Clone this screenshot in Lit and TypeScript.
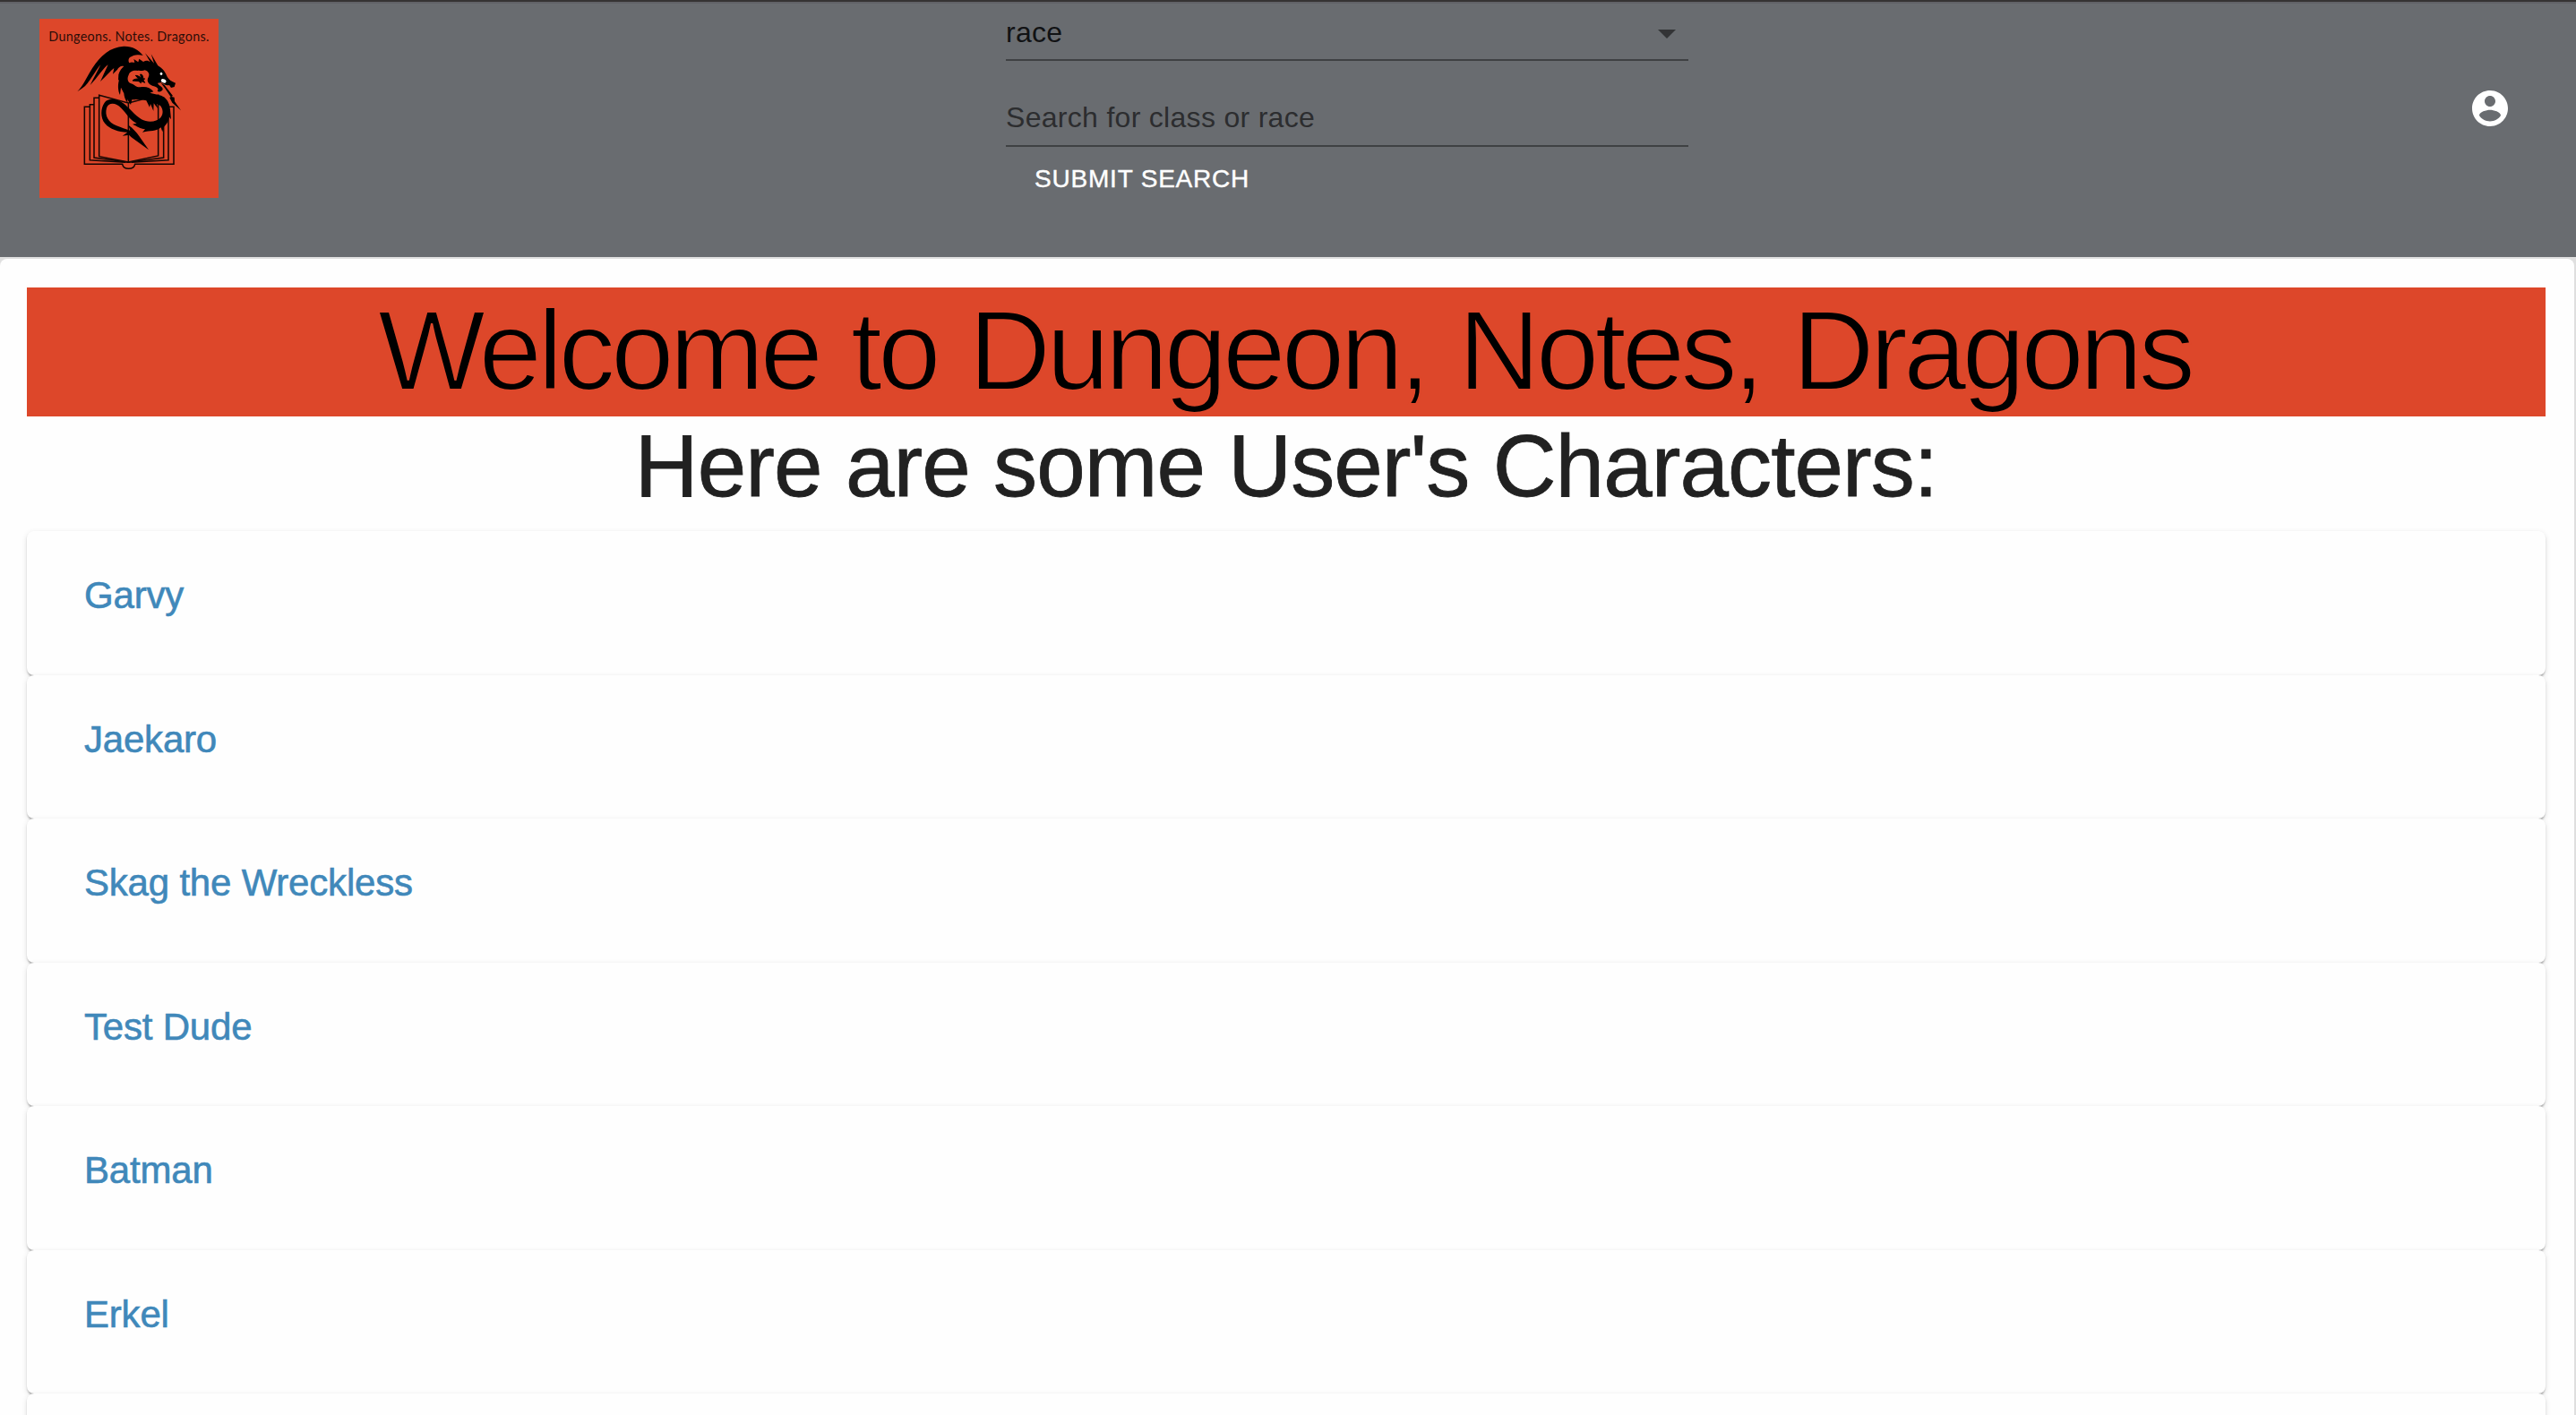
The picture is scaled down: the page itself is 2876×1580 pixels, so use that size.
import { LitElement, html, css, svg } from "lit";
import { customElement, property } from "lit/decorators.js";

const characters = ["Garvy", "Jaekaro", "Skag the Wreckless", "Test Dude", "Batman", "Erkel", ""];

@customElement("brand-logo")
class BrandLogo extends LitElement {
  static styles = css`
    :host { display: block; width: 200px; height: 200px; }
    .logo { display: block; width: 200px; height: 200px; background: #dd472a; }
    .name { font-family: Lato, "Liberation Sans", sans-serif; font-size: 43px; fill: #2b0d08; }
  `;

  render() {
    const book = svg`
      <g fill="none" stroke="#140603" stroke-width="4.6">
        <path d="M210 329H193V521H320C324 541 358 541 362 521H492V329H474"/>
        <path d="M225 321H211V507L330 515M474 321V507L350 515"/>
        <path d="M242 299H225V499L340 515M440 299H458V499L340 515"/>
        <path d="M242 290L340 316V514L242 495ZM340 316L440 290V493L340 514"/>
      </g>`;
    const dragon = svg`
      <path d="M169 278C190 256 202 226 220 198C246 158 280 128 324 126C352 125 374 136 389 157C372 152 350 157 342 167C339 174 341 179 343 182C350 177 357 181 361 180L358 169L373 179L376 168L390 178C400 172 408 175 413 179L396 149L426 183L416 152L439 191C451 198 463 210 468 224C474 238 485 245 498 249L494 262L483 265L477 256C467 258 458 254 452 247L438 249C440 258 457 261 455 271C451 279 442 280 437 276C445 267 432 261 422 259C404 253 401 240 407 230C413 218 406 209 395 206C385 211 377 205 370 208C356 206 344 211 341 222C334 235 339 247 349 251C362 254 362 264 380 263C397 260 414 264 424 278L412 282L450 291C469 299 478 315 480 339L483 371L476 362C476 381 463 391 458 398L454 413L449 398C433 413 413 407 387 414L396 404C379 402 370 394 354 387L368 384C346 374 333 350 316 333C297 312 272 314 267 333C260 358 273 381 300 392C316 398 331 404 346 408L340 390C356 401 367 414 376 427L408 473L350 431L342 423L320 426L337 414C307 414 277 403 262 385C245 365 247 333 260 315C273 298 300 301 323 317C344 333 361 357 384 371C405 383 435 380 448 365C459 351 456 337 447 325L436 319L438 334L425 317L424 343L414 319L411 330L400 308C382 302 363 304 352 305L348 322L336 303L338 317C329 306 326 295 325 284L315 264L312 289C305 275 304 255 309 238L306 240L307 221C310 207 320 198 325 193C316 189 307 197 303 204L288 219L292 199C281 207 268 224 246 244C257 221 265 203 272 188C257 197 236 232 212 256C225 230 238 207 247 188C232 205 214 238 203 250C192 264 184 267 169 278Z"/>
      <path stroke="#000" stroke-width="3" d="M354 241C360 235 369 235 374 235L364 224C370 223 379 229 383 232L380 220C386 219 390 226 389 234L395 235L390 239L395 248L384 243L382 249L375 243Z"/>
      <path d="M448 248L461 256L489 292L484 295L494 297L495 311L516 341L487 315L478 298L482 296L464 269Z"/>
      <ellipse cx="450" cy="218" rx="4" ry="5" fill="#fff"/>
      <ellipse cx="458" cy="242" rx="9" ry="6" transform="rotate(28 458 242)" fill="#fff"/>`;
    return html`<svg class="logo" viewBox="42 34 600 600">
      <text class="name" x="73" y="108" textLength="537">Dungeons. Notes. Dragons.</text>
      ${book}${dragon}
    </svg>`;
  }
}

@customElement("character-card")
class CharacterCard extends LitElement {
  @property() name = "";

  static styles = css`
    :host { display: block; }
    .card {
      box-sizing: border-box; height: 160.5px; padding: 46px 64px; border-radius: 8px; background: #fefefe;
      box-shadow: 0 4px 2px -2px rgba(0,0,0,.2), 0 2px 2px 0 rgba(0,0,0,.14), 0 2px 6px 0 rgba(0,0,0,.12);
    }
    .name {
      color: #4088ba; font-size: 42px; line-height: 52px; letter-spacing: -.2px; text-decoration: none;
      white-space: nowrap; -webkit-text-stroke: .6px #4088ba;
    }
  `;

  render() {
    return html`<div class="card"><a class="name">${this.name}</a></div>`;
  }
}

@customElement("app-root")
class AppRoot extends LitElement {
  static styles = css`
    :host {
      display: block; height: 1580px; overflow: hidden; background: #fefefe;
      font-family: "Liberation Sans", Helvetica, Arial, sans-serif;
    }
    .bar {
      box-sizing: border-box; height: 287px; border-top: 2px solid #353333; background: #696c70;
      box-shadow: inset 0 2px 0 #616267;
      display: grid; grid-template-columns: 1123px 762px 1fr; align-items: start;
    }
    .brand { padding: 19px 0 0 44px; }
    .field {
      box-sizing: border-box; display: flex; justify-content: space-between; align-items: center;
      height: 66px; border-bottom: 2px solid #3f4143; font-size: 32px; letter-spacing: .3px; color: #111214;
    }
    .select { padding-top: 6px; }
    .select .value { line-height: 36px; padding: 0 0 3px; }
    .arrow { width: 48px; height: 48px; fill: #333436; }
    .query { height: 96px; padding-top: 32px; }
    .placeholder { color: #2c2d2f; line-height: 36px; }
    .submit {
      font: inherit; font-size: 28px; line-height: 48px; letter-spacing: .8px; color: #fff;
      background: none; border: 0; margin: 0; padding: 12px 32px; display: block; white-space: nowrap;
      -webkit-text-stroke: .4px #fff;
    }
    .account { display: flex; justify-content: flex-end; padding: 95px 72px 0 0; }
    .account-icon { width: 48px; height: 48px; fill: #fff; }
    .page { padding: 2px 2px 0 0; background: #dfdfdf; }
    .paper { border-radius: 8px; background: #fefefe; padding: 32px 32px 0 30px; height: 1300px; }
    .welcome {
      box-sizing: border-box; padding-right: 4px;
      margin: 0; height: 144px; line-height: 141px; background: #dd472a; color: #000; text-align: center;
      font-size: 127px; font-weight: 400; letter-spacing: -5px; word-spacing: 5.5px; white-space: nowrap;
      -webkit-text-stroke: 2.2px #dd472a;
    }
    .subtitle {
      margin: 0; height: 128px; line-height: 111px; text-align: center; color: #212121;
      font-size: 98px; font-weight: 400; letter-spacing: -.92px; white-space: nowrap;
      -webkit-text-stroke: .8px #212121;
    }
  `;

  render() {
    return html`
      <header class="bar">
        <div class="brand"><brand-logo></brand-logo></div>
        <div class="search">
          <div class="field select">
            <span class="value">race</span>
            <svg class="arrow" viewBox="0 0 24 24"><path d="M7 10l5 5 5-5z"/></svg>
          </div>
          <div class="field query"><span class="placeholder">Search for class or race</span></div>
          <button class="submit">SUBMIT SEARCH</button>
        </div>
        <div class="account">
          <svg class="account-icon" viewBox="0 0 24 24">
            <path d="M12 2C6.48 2 2 6.48 2 12s4.48 10 10 10 10-4.48 10-10S17.52 2 12 2zm0 3c1.66 0 3 1.34 3 3s-1.34 3-3 3-3-1.34-3-3 1.34-3 3-3zm0 14.2c-2.5 0-4.71-1.28-6-3.22.03-1.99 4-3.08 6-3.08 1.99 0 5.97 1.09 6 3.08-1.29 1.94-3.5 3.22-6 3.22z"/>
          </svg>
        </div>
      </header>
      <div class="page">
        <main class="paper">
          <h1 class="welcome">Welcome to Dungeon, Notes, Dragons</h1>
          <h2 class="subtitle">Here are some User's Characters:</h2>
          ${characters.map((name) => html`<character-card .name=${name}></character-card>`)}
        </main>
      </div>
    `;
  }
}
